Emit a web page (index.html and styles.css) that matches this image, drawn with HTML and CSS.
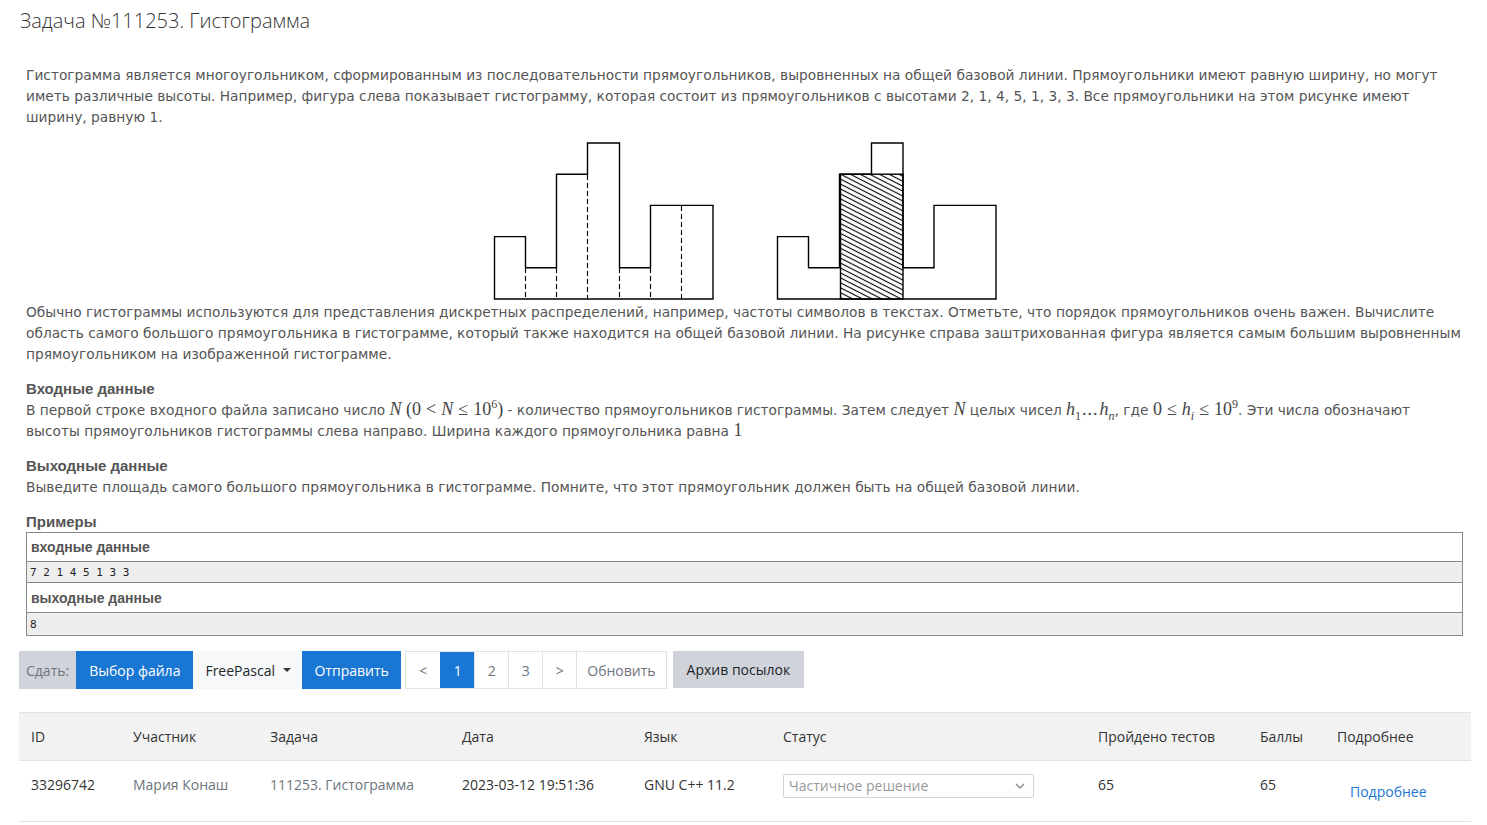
FILE: index.html
```html
<!DOCTYPE html>
<html lang="ru">
<head>
<meta charset="utf-8">
<title>Задача №111253. Гистограмма</title>
<link rel="stylesheet" href="styles.css">
</head>
<body>
<div class="page">
  <h1 class="title">Задача №111253. Гистограмма</h1>

  <div class="statement">
    <p class="para">Гистограмма является многоугольником, сформированным из последовательности прямоугольников, выровненных на общей базовой линии. Прямоугольники имеют равную ширину, но могут иметь различные высоты. Например, фигура слева показывает гистограмму, которая состоит из прямоугольников с высотами 2, 1, 4, 5, 1, 3, 3. Все прямоугольники на этом рисунке имеют ширину, равную 1.</p>

    <div class="figure">
      <svg width="506" height="174" viewBox="0 0 506 174" xmlns="http://www.w3.org/2000/svg">
        <defs>
          <pattern id="hatch" patternUnits="userSpaceOnUse" width="10" height="4.4" patternTransform="rotate(27)">
            <line x1="0" y1="2.2" x2="10" y2="2.2" stroke="#000" stroke-width="1.1"/>
          </pattern>
        </defs>
        <g fill="none" stroke="#000" stroke-width="1.4">
          <path d="M1.5,171 V108.6 H32.5 V139.8 H63.5 V46.2 H94.5 V15 H126.5 V139.8 H157.5 V77.4 H220 V171 Z"/>
        </g>
        <g stroke="#000" stroke-width="1.1" stroke-dasharray="5,3">
          <line x1="32.5" y1="140" x2="32.5" y2="171"/>
          <line x1="63.5" y1="140" x2="63.5" y2="171"/>
          <line x1="94.5" y1="47" x2="94.5" y2="171"/>
          <line x1="126.5" y1="140" x2="126.5" y2="171"/>
          <line x1="157.5" y1="140" x2="157.5" y2="171"/>
          <line x1="188.5" y1="78" x2="188.5" y2="171"/>
        </g>
        <rect x="347.5" y="46.2" width="62.5" height="124.8" fill="url(#hatch)"/>
        <g fill="none" stroke="#000" stroke-width="1.4">
          <path d="M284.5,171 V108.6 H315.5 V139.8 H346.5 V46.2 H378.5 V15 H410 V139.8 H441 V77.4 H503 V171 Z"/>
          <rect x="347.5" y="46.2" width="62.5" height="124.8"/>
        </g>
      </svg>
    </div>

    <p class="para">Обычно гистограммы используются для представления дискретных распределений, например, частоты символов в текстах. Отметьте, что порядок прямоугольников очень важен. Вычислите область самого большого прямоугольника в гистограмме, который также находится на общей базовой линии. На рисунке справа заштрихованная фигура является самым большим выровненным прямоугольником на изображенной гистограмме.</p>

    <h2 class="section-title">Входные данные</h2>
    <p class="para">В первой строке входного файла записано число <span class="math"><i>N</i> (0<span class="op">&lt;</span><i>N</i><span class="op">≤</span>10<sup>6</sup>)</span> - количество прямоугольников гистограммы. Затем следует <span class="math"><i>N</i></span> целых чисел <span class="math"><i>h</i><sub>1</sub><span class="dots">...</span><i>h</i><sub><i>n</i></sub></span>, где <span class="math">0<span class="op">≤</span><i>h</i><sub><i>i</i></sub><span class="op">≤</span>10<sup>9</sup></span>. Эти числа обозначают высоты прямоугольников гистограммы слева направо. Ширина каждого прямоугольника равна <span class="math">1</span></p>

    <h2 class="section-title">Выходные данные</h2>
    <p class="para">Выведите площадь самого большого прямоугольника в гистограмме. Помните, что этот прямоугольник должен быть на общей базовой линии.</p>

    <h2 class="section-title examples-title">Примеры</h2>
    <table class="examples">
      <tr><th class="ex-head">входные данные</th></tr>
      <tr><td class="ex-data"><pre>7 2 1 4 5 1 3 3</pre></td></tr>
      <tr><th class="ex-head ex-head2">выходные данные</th></tr>
      <tr><td class="ex-data ex-data2"><pre>8</pre></td></tr>
    </table>
  </div>

  <div class="toolbar">
    <div class="submit-group">
      <span class="tb-label">Сдать:</span>
      <span class="tb-btn tb-primary">Выбор файла</span>
      <span class="tb-btn tb-light">FreePascal <span class="caret"></span></span>
      <span class="tb-btn tb-primary tb-send">Отправить</span>
    </div>
    <div class="pager">
      <span class="pg">&lt;</span>
      <span class="pg pg-active">1</span>
      <span class="pg">2</span>
      <span class="pg">3</span>
      <span class="pg">&gt;</span>
      <span class="pg pg-refresh">Обновить</span>
    </div>
    <span class="tb-btn tb-secondary">Архив посылок</span>
  </div>

  <table class="runs">
    <thead>
      <tr>
        <th class="c-id">ID</th>
        <th class="c-user">Участник</th>
        <th class="c-prob">Задача</th>
        <th class="c-date">Дата</th>
        <th class="c-lang">Язык</th>
        <th class="c-status">Статус</th>
        <th class="c-tests">Пройдено тестов</th>
        <th class="c-score">Баллы</th>
        <th class="c-more">Подробнее</th>
      </tr>
    </thead>
    <tbody>
      <tr>
        <td>33296742</td>
        <td class="muted">Мария Конаш</td>
        <td class="muted">111253. Гистограмма</td>
        <td>2023-03-12 19:51:36</td>
        <td>GNU C++ 11.2</td>
        <td>
          <div class="status-select">
            <span>Частичное решение</span>
            <svg width="10" height="6" viewBox="0 0 10 6"><path d="M1,1 L5,5 L9,1" fill="none" stroke="#888" stroke-width="1.4"/></svg>
          </div>
        </td>
        <td>65</td>
        <td>65</td>
        <td><a class="more-link" href="#">Подробнее</a></td>
      </tr>
    </tbody>
  </table>
</div>
</body>
</html>
```

FILE: styles.css
```css
html, body {
  margin: 0;
  padding: 0;
  background: #fff;
}

.page {
  padding: 0 16px 0 19px;
}

.title {
  margin: 0;
  padding: 7px 0 0 1px;
  font-family: "Open Sans", "Noto Sans", sans-serif;
  font-weight: 300;
  font-size: 20px;
  line-height: 28px;
  color: #333;
}

.statement {
  padding: 0 8px 0 7px;
  font-family: "DejaVu Sans", Verdana, sans-serif;
  font-size: 13.75px;
  color: #555;
}

.para {
  margin: 0;
  line-height: 21px;
}

.statement > .para:first-child {
  margin-top: 30px;
}

.figure {
  display: flex;
  justify-content: center;
  height: 174px;
}

.figure svg {
  display: block;
  margin-left: 2px;
}

.section-title {
  margin: 13px 0 0;
  font-family: "Liberation Sans", Arial, sans-serif;
  font-weight: bold;
  font-size: 15px;
  line-height: 22px;
  color: #555;
}

.examples-title {
  margin-top: 14px;
  line-height: 20px;
}

.math {
  font-family: "Liberation Serif", "DejaVu Serif", serif;
  font-size: 18px;
  color: #444;
  line-height: 14px;
}

.math .op {
  margin: 0 5px;
}

.math .dots {
  margin: 0 1px;
  letter-spacing: 1px;
}

.math sup, .math sub {
  font-size: 12px;
  line-height: 0;
}

.examples {
  width: 100%;
  border-collapse: collapse;
  border: 1px solid #888;
}

.examples th {
  text-align: left;
  font-family: "Liberation Sans", Arial, sans-serif;
  font-weight: bold;
  font-size: 14px;
  color: #555;
  height: 28px;
  padding: 0 4px;
  border: 1px solid #888;
  background: #fff;
}

.examples .ex-head2 {
  height: 29px;
}

.examples td {
  background: #eee;
  border: 1px solid #888;
  padding: 0 3px;
  height: 20px;
}

.examples .ex-data2 {
  height: 22px;
}

.examples pre {
  margin: 0;
  font-family: "DejaVu Sans Mono", "Liberation Mono", monospace;
  font-size: 11px;
  color: #222;
}

.toolbar {
  display: flex;
  align-items: flex-start;
  margin-top: 15px;
  font-family: "Open Sans", "Noto Sans", sans-serif;
  font-size: 14px;
}

.submit-group {
  display: flex;
  height: 38px;
}

.tb-label {
  display: flex;
  align-items: center;
  padding: 0 7px 0 7px;
  background: #d0d4da;
  color: #6c757d;
}

.tb-btn {
  display: flex;
  align-items: center;
  height: 38px;
  box-sizing: border-box;
  padding: 0 13px;
  color: #212529;
}

.tb-primary {
  background: #1976d2;
  color: #fff;
}

.tb-light {
  background: #f7f8f9;
  padding: 0 11px 0 12px;
}

.caret {
  display: inline-block;
  margin-left: 8px;
  width: 0;
  height: 0;
  border-left: 4px solid transparent;
  border-right: 4px solid transparent;
  border-top: 4px solid #333;
}

.tb-send {
  padding: 0 12.5px;
}

.tb-secondary {
  margin-left: 6px;
  background: #d0d4da;
  height: 37px;
  padding: 0 14px;
}

.pager {
  display: flex;
  margin-left: 4px;
  border: 1px solid #dee2e6;
  height: 36px;
}

.pg {
  display: flex;
  align-items: center;
  justify-content: center;
  width: 33px;
  border-left: 1px solid #dee2e6;
  color: #6c757d;
}

.pg:first-child {
  border-left: none;
  width: 34px;
}

.pg-active {
  background: #1976d2;
  color: #fff;
  border-left-color: #1976d2;
}

.pg-refresh {
  width: auto;
  padding: 0 10px;
}

.runs {
  width: 100%;
  margin-top: 23px;
  border-collapse: collapse;
  font-family: "Open Sans", "Noto Sans", sans-serif;
  font-size: 14px;
  color: #333;
  table-layout: fixed;
}

.runs th {
  text-align: left;
  font-weight: normal;
  background: #f2f2f2;
  height: 48px;
  box-sizing: border-box;
  padding: 0 12px;
  border-top: 1px solid #e2e2e2;
  border-bottom: 1px solid #e2e2e2;
}

.runs td {
  vertical-align: top;
  padding: 12px 12px 0;
  height: 61px;
  box-sizing: border-box;
  line-height: 24px;
  border-bottom: 1px solid #e2e2e2;
}

.c-id { width: 102px; }
.c-user { width: 137px; }
.c-prob { width: 192px; }
.c-date { width: 182px; }
.c-lang { width: 139px; }
.c-status { width: 315px; }
.c-tests { width: 162px; }
.c-score { width: 77px; }
.c-more { width: 146px; }

.muted {
  color: #6c757d;
}

.status-select {
  display: flex;
  align-items: center;
  justify-content: space-between;
  width: 251px;
  height: 24px;
  box-sizing: border-box;
  margin-top: 1px;
  padding: 0 8px 0 5px;
  border: 1px solid #d5d5d5;
  border-radius: 2px;
  color: #999;
  line-height: 22px;
}

.status-select svg {
  display: block;
}

.more-link {
  display: inline-block;
  margin: 7px 0 0 13px;
  color: #1976d2;
  text-decoration: none;
}
```
